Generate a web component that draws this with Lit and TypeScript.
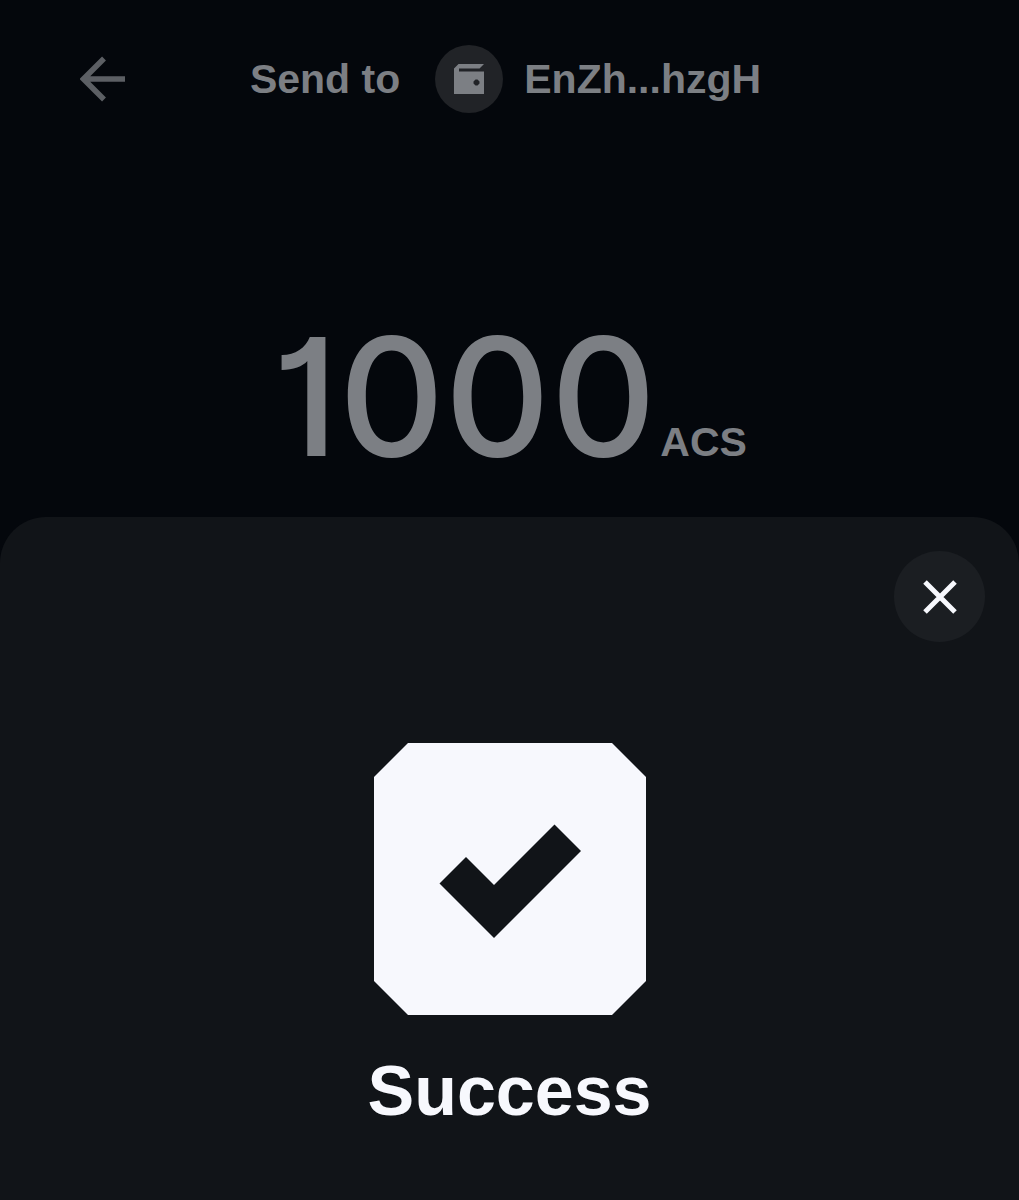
import { LitElement, html, css } from "lit";
import { customElement, property } from "lit/decorators.js";

@customElement("send-header")
class SendHeader extends LitElement {
  @property() recipient = "";

  static styles = css`
    :host {
      display: block;
    }
    .bar {
      display: grid;
      grid-template-columns: 1fr auto 1fr;
      align-items: center;
      padding: 44px 76px 0 68px;
    }
    .back {
      justify-self: start;
      display: flex;
      padding: 12px;
      margin: 0;
      border: 0;
      background: none;
      color: #5c5f64;
      cursor: pointer;
    }
    .title {
      display: flex;
      align-items: center;
      margin: 0;
      font-size: 41px;
      line-height: 48px;
      font-weight: 700;
      color: #7c7f84;
      white-space: nowrap;
    }
    .avatar {
      display: flex;
      align-items: center;
      justify-content: center;
      width: 68px;
      height: 68px;
      margin: 0 21px 0 35px;
      border-radius: 50%;
      background: #212327;
    }
    svg {
      display: block;
    }
  `;

  render() {
    return html`
      <header class="bar">
        <button class="back" aria-label="Back">
          <svg width="46" height="46" viewBox="0 0 46 46" fill="none" stroke="currentColor" stroke-width="5.500">
            <path d="M24 2.500 3.500 23 24 43.500M4 23H45" />
          </svg>
        </button>
        <h1 class="title">
          <span>Send to</span>
          <span class="avatar">
            <svg width="30" height="32" viewBox="0 0 30 32" fill="currentColor">
              <path
                fill-rule="evenodd"
                d="M4.500 1H30L25.500 5.500H5V8.500H30V31H0V5.500ZM21.500 16.500 19.500 18.500V20.500L21.500 22.500H23.500L25.500 20.500V18.500L23.500 16.500Z"
              />
            </svg>
          </span>
          <span>${this.recipient}</span>
        </h1>
      </header>
    `;
  }
}

@customElement("success-sheet")
class SuccessSheet extends LitElement {
  @property() message = "";

  static styles = css`
    :host {
      display: flex;
      flex-direction: column;
      background: #111418;
      border-radius: 46px 46px 0 0;
      color: #f7f8fd;
    }
    .top {
      display: flex;
      justify-content: flex-end;
      padding: 34px 34px 0;
    }
    .close {
      display: flex;
      align-items: center;
      justify-content: center;
      width: 91px;
      height: 91px;
      padding: 0;
      border: 0;
      border-radius: 50%;
      background: #1b1e22;
      color: inherit;
      cursor: pointer;
    }
    .body {
      display: flex;
      flex-direction: column;
      align-items: center;
      gap: 36px;
      padding: 101px 32px 24px;
    }
    .message {
      margin: 0;
      font-size: 70px;
      line-height: 80px;
      font-weight: 700;
    }
    svg {
      display: block;
    }
  `;

  render() {
    return html`
      <div class="top">
        <button class="close" aria-label="Close">
          <svg width="34" height="34" viewBox="0 0 34 34" fill="none" stroke="currentColor" stroke-width="5">
            <path d="M2 2 32 32M32 2 2 32" />
          </svg>
        </button>
      </div>
      <div class="body">
        <svg width="272" height="272" viewBox="0 0 272 272" aria-hidden="true">
          <path fill="#f7f8fd" d="M34 0H238L272 34V238L238 272H34L0 238V34Z" />
          <path fill="#111418" d="M65.500 140.500 92 114 120 142 180.500 81.500 207 108 120 195Z" />
        </svg>
        <h2 class="message">${this.message}</h2>
      </div>
    `;
  }
}

@customElement("app-root")
class AppRoot extends LitElement {
  static styles = css`
    :host {
      display: flex;
      flex-direction: column;
      min-height: 100vh;
      background: #04070c;
      font-family: "Liberation Sans", Arial, sans-serif;
    }
    .amount {
      display: flex;
      align-items: baseline;
      justify-content: center;
      gap: 4px;
      margin: 0;
      padding: 187px 32px 24px;
      color: #7c7f84;
    }
    .value {
      font-family: Inter, "Liberation Sans", sans-serif;
      font-feature-settings: "cv01";
      font-size: 164px;
      line-height: 192px;
      font-weight: 500;
    }
    .unit {
      font-size: 41px;
      line-height: 48px;
      font-weight: 700;
    }
    .sheet {
      flex: 1;
    }
  `;

  render() {
    return html`
      <send-header recipient="EnZh...hzgH"></send-header>
      <p class="amount">
        <span class="value">1000</span>
        <span class="unit">ACS</span>
      </p>
      <success-sheet class="sheet" message="Success"></success-sheet>
    `;
  }
}
